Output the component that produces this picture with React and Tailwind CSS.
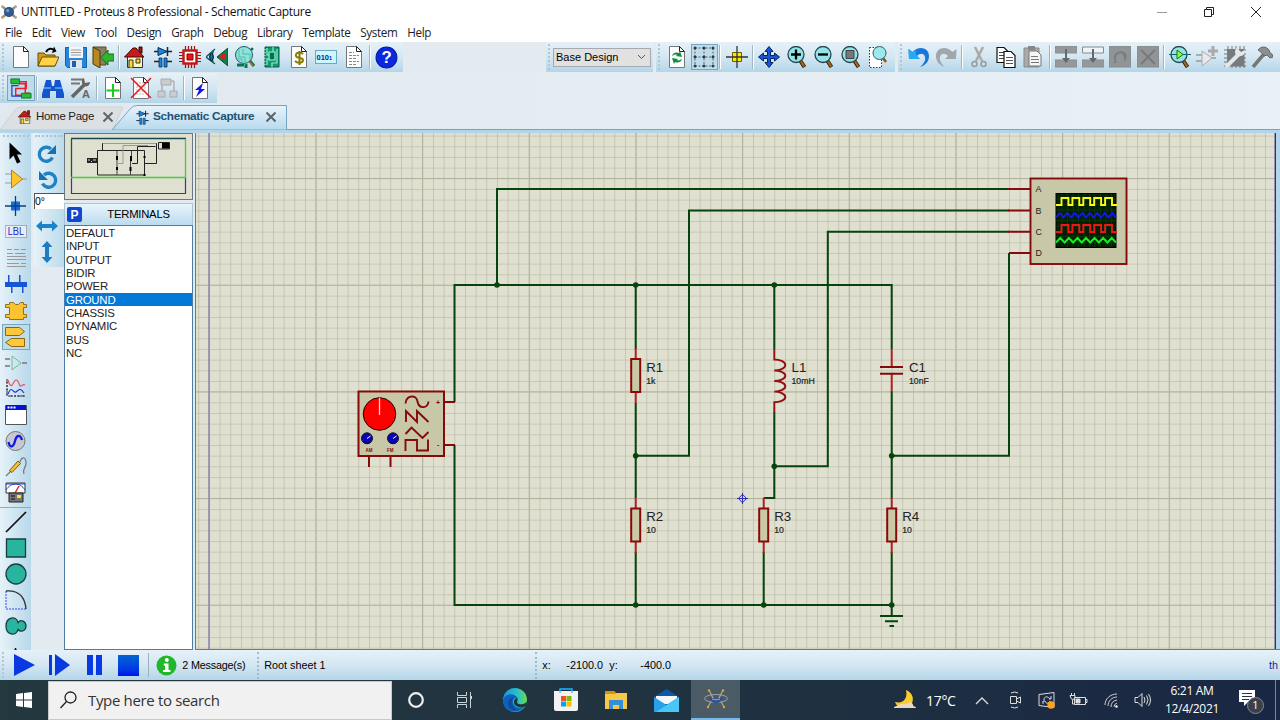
import React from "react";

const G = ({ children, s = 22, v = 22 }) => (
  <svg width={s} height={s} viewBox={`0 0 ${v} ${v}`} fill="none" className="shrink-0">
    {children}
  </svg>
);

const Page = ({ children, fold = "#fff" }) => (
  <>
    <path d="M3.500 .5h10l5 5v16h-15z" fill="#fdfdfd" stroke="#777" />
    <path d="M13.500 .5v5h5z" fill={fold} stroke="#222" />
    {children}
  </>
);

const Lens = ({ children }) => (
  <>
    <path d="M14.500 15l4 6" stroke="#3b2208" strokeWidth="4" />
    <path d="M15 15.500l3.200 5" stroke="#a8681c" strokeWidth="2.200" />
    <circle cx="10" cy="8.500" r="8" fill="#93e4e8" stroke="#24474e" strokeWidth="1.300" />
    {children}
  </>
);

const House = ({ s = 22 }) => (
  <G s={s}>
    <path d="M15 1h3v6h-3z" fill="#a01818" stroke="#300" />
    <path d="M3.500 10.500h15v11h-15z" fill="#fff6c8" stroke="#333" />
    <path d="M.5 11L9 2h3l8 9z" fill="#c41c1c" stroke="#4a0808" />
    <path d="M5 14h4v8H5z" fill="#f4dc2c" stroke="#333" />
    <path d="M12 13h4v4h-4z" fill="#f4dc2c" stroke="#333" />
  </G>
);

const DiodeCap = ({ s = 22 }) => (
  <G s={s}>
    <path d="M2 5.500h18M2 15.500h5M15 15.500h5" stroke="#222" strokeWidth="1.400" />
    <path d="M6 1.500v8l9-4z" fill="#1789e0" stroke="#0a2a50" />
    <path d="M15.500 1v9" stroke="#0a2a50" strokeWidth="1.500" />
    <path d="M7 12v9h3v-9zM12 12v9h3v-9z" fill="#1789e0" stroke="#0a2a50" strokeWidth=".8" />
  </G>
);

const icons = {
  newFile: <G><Page /></G>,
  open: (
    <G>
      <path d="M1 20V7h6l2 2h9v11z" fill="#d59a12" stroke="#6b4c08" />
      <path d="M1 20l4-9h17l-4 9z" fill="#ffd248" stroke="#6b4c08" />
      <path d="M9 6c2-4 6-4 8-2" stroke="#000" strokeWidth="2" />
      <path d="M15 7l4.500-1.500L17 .5z" fill="#000" />
    </G>
  ),
  save: (
    <G>
      <path d="M.5 1.500h21v20h-19l-2-2z" fill="#2586dc" stroke="#1460a8" />
      <path d="M4 1h14v11H4z" fill="#f6f6f6" />
      <path d="M6 4h10M6 6.500h10M6 9h10" stroke="#999" />
      <path d="M5 14h12v8H5z" fill="#e4e4e4" />
      <path d="M7 15h4v6H7z" fill="#1d5fa8" />
    </G>
  ),
  exit: (
    <G>
      <path d="M1 1h13v18H7" fill="#888061" stroke="#5a491c" />
      <path d="M1 1l7 4v17l-7-4z" fill="#b58a22" stroke="#4b3808" />
      <path d="M22 8v7h-6v4l-7-7.500L16 4v4z" fill="#2fb52f" stroke="#167016" />
    </G>
  ),
  house: <House />,
  diode: <DiodeCap />,
  chip: (
    <G>
      <path d="M6.500 0v22M9.500 0v22M12.500 0v22M15.500 0v22M0 6.500h22M0 9.500h22M0 12.500h22M0 15.500h22" stroke="#a51010" strokeWidth="1.200" />
      <path d="M4.500 4.500h13v13h-13z" fill="#fff" stroke="#c41818" strokeWidth="2.500" />
      <path d="M8 8h6v6H8z" fill="#ec1515" stroke="#800" />
    </G>
  ),
  view3d: (
    <G>
      <path d="M9 3L0 11l9 7M7.500 5c-2 4-2 8 0 12" stroke="#175a66" strokeWidth="1.400" />
      <ellipse cx="5.500" cy="11" rx="1.800" ry="3.500" fill="#067caf" stroke="#000" />
      <path d="M22 2v18l-11-9z" fill="#08824c" stroke="#054d2d" />
      <path d="M14 9l6-2v7l-6-2z" fill="#d42222" />
    </G>
  ),
  gerber: (
    <G>
      <path d="M3 19h7M12 18v4M16 15l4 5" stroke="#08754a" strokeWidth="3" />
      <circle cx="10" cy="9" r="8.500" fill="#92e2dc" stroke="#155f60" />
      <path d="M5 4v7h6v8M9 3v5h7v6M3 13h5v5" stroke="#4fb9a8" strokeWidth="1" />
      <circle cx="18" cy="3" r="1.500" fill="#0a7451" />
      <path d="M16 16l3 4" stroke="#a9701c" strokeWidth="2" />
    </G>
  ),
  bomBoard: (
    <G>
      <path d="M4 1h14v20H4z" fill="#179670" stroke="#075c42" />
      <path d="M8 6h6v8H8zM6 2v7h2M12 1v5M16 3v14h-5v4M6 19v-6h2" stroke="#86efcf" strokeWidth="1.200" />
      <path d="M9 7h4v6H9z" fill="#087049" />
      <path d="M4 3v17" stroke="#d8fff0" strokeDasharray="1 2" />
    </G>
  ),
  dollar: (
    <G>
      <Page />
      <path d="M15 8c-3-3-8-1-7 2s7 1 7 4-5 4-8 1M11.500 5v14" stroke="#8b7800" strokeWidth="2" />
    </G>
  ),
  bits: (
    <svg width="22" height="22" viewBox="0 0 22 22">
      <rect x=".5" y="4.500" width="21" height="13" fill="#cbf7ff" stroke="#6da7bc" />
      <text x="1.500" y="13.500" fontSize="7.500" fontWeight="bold" fontFamily="Liberation Sans" fill="#0a22a8">010<tspan fontSize="5.500">1</tspan></text>
    </svg>
  ),
  report: (
    <G><Page><path d="M6 6.500h5M6 9.500h10M6 12.500h7M6 15.500h10M6 18.500h8" stroke="#888" strokeDasharray="3 1" /></Page></G>
  ),
  help: (
    <svg width="23" height="23" viewBox="0 0 22 22">
      <circle cx="11" cy="11" r="10" fill="#0928df" stroke="#0618a0" />
      <text x="11" y="16.500" textAnchor="middle" fontSize="16" fontWeight="bold" fontFamily="Liberation Sans" fill="#fff">?</text>
    </svg>
  ),
  refresh: (
    <G>
      <Page>
        <path d="M6 10c1-4 5-4 7-3l1-2 2 6-6-1 1-1c-2-1-3 0-5 1zM16 13c-1 4-5 4-7 3l-1 2-2-6 6 1-1 1c2 1 3 0 5-1z" fill="#148b43" />
      </Page>
    </G>
  ),
  grid: (
    <G>
      <path d="M2 2h18M2 11h18M2 20h18M2 2v18M11 2v18M20 2v18" stroke="#444" strokeDasharray="2 1.500" strokeWidth=".8" />
      <path d="M.5 2h3M2 .5v3M9.500 2h3M11 .5v3M18.500 2h3M20 .5v3M.5 11h3M2 9.500v3M9.500 11h3M11 9.500v3M18.500 11h3M20 9.500v3M.5 20h3M2 18.500v3M9.500 20h3M11 18.500v3M18.500 20h3M20 18.500v3" stroke="#111" />
    </G>
  ),
  origin: (
    <G>
      <path d="M6.500 6.500h9v9h-9z" fill="#ffe800" stroke="#665c00" />
      <path d="M11 0v22M0 11h22" stroke="#333" strokeWidth="1.300" />
    </G>
  ),
  pan: (
    <G>
      <path d="M11 .5l4 5h-2.500v4h4V7l5 4-5 4v-2.500h-4v4H15l-4 5-4-5h2.500v-4h-4V15l-5-4 5-4v2.500h4v-4H7z" fill="#1554dc" stroke="#052454" />
    </G>
  ),
  zoomIn: <G><Lens><path d="M5 8.500h10M10 3.500v10" stroke="#000" strokeWidth="2.300" /></Lens></G>,
  zoomOut: <G><Lens><path d="M5 8.500h10" stroke="#000" strokeWidth="2.300" /></Lens></G>,
  zoomAll: <G><Lens><path d="M6 4.500h8v8H6z" fill="#777" stroke="#444" /></Lens></G>,
  zoomArea: (
    <G>
      <path d="M2.500 1.500h12v20h-12z" fill="#fff" stroke="#333" strokeDasharray="1.500 1.500" />
      <path d="M16 12l3 4" stroke="#8b5418" strokeWidth="2.500" />
      <circle cx="12.500" cy="7" r="6.500" fill="#9ce8ed" stroke="#24626c" />
    </G>
  ),
  undo: <G><path d="M1 13L.5 3l4 3C11-1 21 2 21 10c0 5-3 9-9 11 4-3 6-7 5-10-1-4-5-4-8-1l3 3z" fill="#1976dc" /><path d="M1 13L.5 3l4 3 3-2 1 6 3 3z" fill="#25aaf2" /></G>,
  redo: <G><path d="M21 13l.5-10-4 3C11-1 1 2 1 10c0 5 3 9 9 11-4-3-6-7-5-10 1-4 5-4 8-1l-3 3z" fill="#a0a6a9" /></G>,
  cut: (
    <G>
      <path d="M7 1l7 14M15 1L8 15" stroke="#aaa" strokeWidth="2.500" />
      <circle cx="6.500" cy="18" r="2.500" stroke="#999" strokeWidth="1.500" />
      <circle cx="15.500" cy="18" r="2.500" stroke="#999" strokeWidth="1.500" />
    </G>
  ),
  copy: (
    <G>
      <path d="M2 1.500h7l4 4v11H2z" fill="#fff" stroke="#111" strokeWidth="1.200" />
      <path d="M4 6.500h5M4 9.500h7M4 12.500h7" stroke="#444" />
      <path d="M9 5.500h7l4 4v12H9z" fill="#fff" stroke="#111" strokeWidth="1.200" />
      <path d="M11 11.500h7M11 14.500h7M11 17.500h7" stroke="#555" />
    </G>
  ),
  paste: (
    <G>
      <path d="M2 2h15v19H2z" fill="#aaa" stroke="#888" />
      <path d="M6 0h7v4H6z" fill="#888" />
      <path d="M7 5h8l4 4v11H7z" fill="#f5f5f5" stroke="#777" />
      <path d="M9 10.500h7M9 13.500h8M9 16.500h8" stroke="#777" />
    </G>
  ),
  blockCopy: <G><path d="M0 0h22v7H0zM0 14h22v7H0z" fill="#96999b" stroke="#898c8e" /><path d="M10 3h2v9h3l-4 5-4-5h3z" fill="#65696b" /></G>,
  blockMove: <G><path d="M.5 1h21v6H.5z" fill="#edf4f8" stroke="#858a8c" /><path d="M0 14h22v7H0z" fill="#96999b" stroke="#898c8e" /><path d="M10 3h2v9h3l-4 5-4-5h3z" fill="#65696b" /></G>,
  blockRot: <G><path d="M0 0h22v21H0z" fill="#929597" stroke="#858889" /><path d="M8 17H4l1.500-2C1 3 20 2 17.500 12L15 17c2-13-9-12-8-3z" fill="#7b7e80" /></G>,
  blockDel: <G><path d="M0 0h22v21H0z" fill="#929597" stroke="#858889" /><path d="M4 4l14 14M18 4L4 18" stroke="#77797b" strokeWidth="2" /></G>,
  pick: <G><Lens><path d="M0 8.500h22" stroke="#15616c" /><path d="M8 4v9l6-4.500z" fill="#8ffb43" stroke="#167316" /></Lens></G>,
  makeDev: <G><path d="M0 9h7M0 15h7M15 12h5" stroke="#999" strokeWidth="1.500" /><path d="M6 5v15l10-8z" fill="#e9e9e9" stroke="#aaa" /><path d="M17 0v10M12 5h10" stroke="#aaa" strokeWidth="3" /></G>,
  packaging: (
    <G>
      <path d="M4 0v22M8 0v22M12 0v22M16 0v22M20 0v22M0 4h22M0 8h22M0 12h22M0 16h22M0 20h22" stroke="#777" />
      <path d="M3 3h17v17H3z" fill="#767b7e" />
      <path d="M2 21L15 8" stroke="#e4e6e8" strokeWidth="4" />
      <path d="M14 1c-4 2-4 8 0 9 4 1 8-2 7-6l-4 2-2-2z" fill="#e4e6e8" />
    </G>
  ),
  hammer: <G><path d="M2 21L13 8" stroke="#777" strokeWidth="3.500" /><path d="M7 4c3-4 8-4 11 0l1 3 2 1 1 3-3 1-3-3-3 1-3-4z" fill="#8c8f91" stroke="#666" /></G>,
  wire: (
    <G s={23} v={24}>
      <path d="M8 5h10v7H7v7h13M10 7h7v10h5" stroke="#e82030" strokeWidth="1.500" />
      <path d="M10 9H3v11h10" stroke="#2835db" strokeWidth="1.300" />
      <path d="M2 2h9v5H2zM13 17h10v5H13z" fill="#25bd36" stroke="#14791f" />
    </G>
  ),
  binoc: <G><path d="M4 3h5l1 6h2l1-6h5l4 14v4h-8v-7h-6v7H0v-4z" fill="#1455ce" /><path d="M2 11h7M13 11h7" stroke="#4b94f0" strokeWidth="2" /></G>,
  propTool: (
    <svg width="22" height="22" viewBox="0 0 22 22" fill="none">
      <path d="M1 2.500h13M1 6.500h9" stroke="#777" strokeWidth="2" />
      <path d="M2 20L15 7" stroke="#666" strokeWidth="3.500" />
      <path d="M14 1l1 5 5-1c0 4-4 6-7 3-2-3-1-6 1-7z" fill="#666" />
      <text x="12" y="21" fontSize="11" fontWeight="bold" fontFamily="Liberation Sans" fill="#666">A</text>
    </svg>
  ),
  addSheet: <G><Page><path d="M11 7v13M4.500 13.500h13" stroke="#18cc20" strokeWidth="2" /></Page></G>,
  delSheet: <G><Page><path d="M6 6h9M6 17h9M7 9h8v5H7z" stroke="#bbb" strokeDasharray="2 1" /></Page><path d="M1 1l20 20M21 1L1 21" stroke="#ec1515" strokeWidth="1.500" /></G>,
  hier: <G><path d="M5 14V4h12v10" stroke="#999" /><path d="M4 2h10v6H4zM1 14h7v6H1zM13 14h7v6h-7z" fill="#ccc" stroke="#aaa" /></G>,
  erc: <G><Page><path d="M14 6l-8 7h4l-3 7 9-8h-4z" fill="#1418e4" /></Page></G>,
};

const Cell = ({ n }) => <div className="flex h-[28px] w-[27.3px] shrink-0 items-center justify-center">{icons[n]}</div>;
const Active = ({ n }) => (
  <div className="flex h-[26px] w-[27.3px] shrink-0 items-center justify-center border border-[#7ba6bf] bg-[#bddcec]">{icons[n]}</div>
);
const Sep = () => (
  <div className="flex w-[5.2px] shrink-0 justify-center">
    <div className="h-[24px] w-[2px] border-l border-[#a0b5c1] border-r border-r-white" />
  </div>
);
const Grip = () => <div className="ml-[2px] mr-[3.300px] h-[26px] w-[2px] shrink-0 border-l-2 border-dotted border-[#afc7d5]" />;
const bar = "flex items-center bg-gradient-to-b from-[#e6f1f8] via-[#d4e7f2] to-[#b4d6e9]";
const Cells = ({ names }) => names.split(" ").map((n) => <Cell key={n} n={n} />);

const X = () => (
  <svg width="10" height="10" viewBox="0 0 10 10" className="shrink-0"><path d="M.5 .5l9 9M9.500 .5l-9 9" stroke="#5a6469" strokeWidth="2" /></svg>
);

const Logo = ({ s = 18, dim = false }) => (
  <svg width={s} height={s} viewBox="0 0 24 24" fill="none">
    {dim ? (
      <>
        <ellipse cx="12" cy="11.500" rx="11.500" ry="4" stroke="#9aa0a8" />
        <path d="M5 3l4 8-5 9M19 3l-4 8 5 9" stroke="#b4a486" strokeWidth="1.200" />
        <path d="M5 10c4 2 10 2 14 0-1 8-13 8-14 0z" fill="#34508e" />
        <path d="M8 12c2 1 6 1 8 0" stroke="#8ea6d8" />
        <circle cx="5" cy="3.500" r="1.200" fill="#e8a02a" /><circle cx="19" cy="3.500" r="1.200" fill="#e8a02a" />
        <circle cx="4" cy="20" r="1.200" fill="#e8a02a" /><circle cx="20" cy="20" r="1.200" fill="#e8a02a" />
      </>
    ) : (
      <>
        <path d="M1 3l22 18M23 3L1 21" stroke="#8a8f99" strokeWidth="3.500" />
        <circle cx="12" cy="12" r="7" fill="#30598f" stroke="#1c3356" />
        <circle cx="10" cy="10" r="2.500" fill="#6d9cd0" />
        <circle cx="2" cy="20" r="1.800" fill="#e3a34a" /><circle cx="22" cy="20" r="1.800" fill="#e3a34a" />
        <circle cx="2" cy="4" r="1.500" fill="#c9b080" /><circle cx="22" cy="4" r="1.500" fill="#c9b080" />
      </>
    )}
  </svg>
);

const side = [
  <G><path d="M4.500 .5v17l4-4 3.500 8 3.500-1.600-3.500-7.400h5z" fill="#000" /></G>,
  <G><path d="M0 6h7M0 15h7M17 11h5" stroke="#999" /><path d="M6.500 2v18l11-9z" fill="#ffc62c" stroke="#a88125" /></G>,
  <G><path d="M6 6.500h9v9H6z" fill="#146ed8" /><path d="M10.500 1v20M0 11h21" stroke="#0a3f80" strokeWidth="1.300" /></G>,
  <svg width="22" height="22" viewBox="0 0 22 22"><rect x=".5" y="4.500" width="21" height="12" fill="#e5eef8" stroke="#777" strokeDasharray="1 1" /><text x="2.500" y="14.300" fontSize="10" letterSpacing="-.2" fontFamily="Open Sans" fill="#1b27bd">LBL</text></svg>,
  <G><path d="M2 2.500h5M9 2.500h5M16 2.500h5M2 6.500h6M10 6.500h10M2 9.500h19M2 12.500h19M2 16.500h12M16 16.500h5M2 19.500h19" stroke="#999" /></G>,
  <G><path d="M0 8h22v5H0zM3 1h1.500v8H3zM14 1h1.500v8H14zM6 12h1.500v7H6zM17 12h1.500v7H17z" fill="#1755d4" /></G>,
  <G><path d="M.5 4.500h4v-2h4l2 2h3l2-2h3v2h3v3h-3v7h3v3h-3v2h-14v-2h-4v-3h4v-7h-4z" fill="#fbc42f" stroke="#907026" /></G>,
  <G><path d="M.5 1.500h14l5 4-5 4h-14zM19.500 12.500h-13l-6 4 6 4h13z" fill="#ffc83b" stroke="#8c6613" /></G>,
  <G><path d="M0 7h5M0 14h5M17 11h5" stroke="#777" strokeWidth="1.300" /><path d="M7 4v14l9-7z" stroke="#71be89" /></G>,
  <G><path d="M2 1v17h18M1 4h2M1 8h2M1 12h2M1 16h2M6 17v3M10 17v3M14 17v3M18 17v3" stroke="#333" strokeDasharray="2 1" /><path d="M3 2c4 13 5 0 8 0s3 7 5 6 2-2 4-1" stroke="#e05060" strokeWidth="1.200" /><path d="M3 16c4-10 5 0 8-2s4-5 8 1" stroke="#2832db" strokeWidth="1.200" /></G>,
  <G><path d="M.5 1.500h21v19H.5z" fill="#fff" stroke="#555" /><path d="M1 1h20v5H1z" fill="#0610d4" /><path d="M2.500 3.500h8" stroke="#fff" strokeWidth="2" strokeDasharray="2 1" /></G>,
  <G><circle cx="10.500" cy="11" r="9.500" fill="#c6c8d2" stroke="#777" /><path d="M3.500 12c1.500 7 5 5 6.500-1s5-7 7-1" stroke="#1019df" strokeWidth="2.300" /></G>,
  <G><path d="M1 20l5-5M15 6c2-6 6-5 6 1s-4 5-2 11" stroke="#777" strokeWidth="1.200" /><path d="M4.500 14.500L13 5l2.500 2.500-8.500 9z" fill="#f5bf31" stroke="#79591c" /></G>,
  <G><path d="M1 1h19v10H1z" fill="#fff" stroke="#333" /><path d="M1 8c5-8 14-8 19 0M1 2h19" stroke="#2540b5" /><path d="M14 4l-4 7" stroke="#e22" strokeWidth="1.500" /><path d="M4 11h14v9H4z" fill="#777" stroke="#222" /><path d="M12 13h4v3h-4z" fill="#f6e442" /><path d="M6 14h4M6 17h4" stroke="#111" /></G>,
  null,
  <G><path d="M1 21L21 1" stroke="#111" strokeWidth="1.700" /></G>,
  <G><path d="M1.500 2h19v18h-19z" fill="#28b49e" stroke="#173f43" strokeWidth="1.300" /></G>,
  <G><circle cx="11" cy="11" r="10" fill="#28b49e" stroke="#173f43" strokeWidth="1.300" /></G>,
  <G><path d="M1 2v18h20" stroke="#3b4bea" strokeDasharray="2 1" /><path d="M1 2c14-1 19 7 20 18" stroke="#333" strokeWidth="1.300" /></G>,
  <G><path d="M13 7.500c3-4 8-1 8 3.500s-5 7-8 3.500C11 22 1 20 1 11S11 0 13 7.500z" fill="#28b49e" stroke="#173f43" strokeWidth="1.300" /></G>,
  <G><path d="M5 22L10 7h1l6 15h-4l-2-8-3 8z" fill="#111" /></G>,
];

const Wires = ({ children }) => <g stroke="#05450c" strokeWidth="2" fill="none">{children}</g>;
const Label = ({ x, y, name, value }) => (
  <g fontFamily="Liberation Sans" fill="#222">
    <text x={x} y={y} fontSize="13.300">{name}</text>
    <text x={x} y={y + 12} fontSize="8.700" stroke="#222" strokeWidth=".2">{value}</text>
  </g>
);
const Res = ({ x, y, name, value }) => (
  <g>
    <path d={`M${x} ${y - 27}v11M${x} ${y + 17}v12`} stroke="#b22222" strokeWidth="2" />
    <rect x={x - 4.5} y={y - 16} width="9" height="33" fill="#cac9a5" stroke="#850a0a" strokeWidth="2" />
    <Label x={x + 10.5} y={y - 3.5} name={name} value={value} />
  </g>
);
const square = (y) => `M1056 ${y + 7}h5.500` + "v-7h6.900v7h4".repeat(4) + "v-7h6.900v7h5";
const tri = (y, n) => {
  const w = 60 / n;
  return `M1056 ${y}` + `l${w / 2} -4.500l${w / 2} 4.500`.repeat(n);
};

const Schematic = () => (
  <svg className="block h-[516px] w-[1080px]" viewBox="196 133 1080 516" fill="none">
    <defs>
      <pattern id="fine" x="742.300" y="498.300" width="10.667" height="10.667" patternUnits="userSpaceOnUse">
        <path d="M0 .25h10.667M.25 0v10.667" stroke="#bfc0ac" strokeWidth="1.100" />
      </pattern>
      <pattern id="coarse" x="742" y="498" width="106.667" height="106.667" patternUnits="userSpaceOnUse">
        <path d="M0 .5h106.667M.5 0v106.667" stroke="#b2b4a0" strokeWidth="1.200" />
      </pattern>
    </defs>
    <rect x="196" y="133" width="1080" height="516" fill="#dfe0d0" />
    <rect x="196" y="133" width="1080" height="516" fill="url(#fine)" />
    <rect x="196" y="133" width="1080" height="516" fill="url(#coarse)" />
    <path d="M209 133v516" stroke="#8b86b8" strokeWidth="1.500" />
    <path d="M1275.300 133v516" stroke="#2f2a92" strokeWidth="1.400" />
    <Wires>
      <path d="M454.500 402V285H891.700v64M497 285V189h512M635.700 285v64M774.300 285v64" />
      <path d="M635.700 403v95M635.700 455.700H689V210.500h320M774.300 412v86H764M774.300 466.300h53.500V231.700H1009" />
      <path d="M891.700 391v108M891.700 455.700H1009V253M635.700 552v53M763.700 552v53M891.700 552v64M454.500 445v160H891.700" />
      <path d="M880 616h23M885 621.300h13M889.500 626h4.500" />
    </Wires>
    {[[497, 285], [635.7, 285], [774.3, 285], [635.7, 455.7], [774.3, 466.3], [891.7, 455.7], [635.7, 605], [763.7, 605], [891.7, 605]].map(([x, y]) => (
      <circle key={`${x}-${y}`} cx={x} cy={y} r="2.800" fill="#05450c" />
    ))}
    <Res x={635.7} y={375} name="R1" value="1k" />
    <Res x={635.7} y={524.5} name="R2" value="10" />
    <Res x={763.7} y={524.5} name="R3" value="10" />
    <Res x={891.7} y={524.5} name="R4" value="10" />
    <path d="M774.300 349v10.500c5 0 11 2 11 5.500s-6 5.500-11 5.500c5 0 11 2 11 5.200s-6 5.300-11 5.300c5 0 11 2 11 5.300s-6 5.300-11 5.300c5 0 11 2 11 5.300s-6 5.300-11 5.300v10" stroke="#921010" strokeWidth="1.900" />
    <Label x={791.5} y={371.5} name="L1" value="10mH" />
    <path d="M891.700 349v17M891.700 374v18" stroke="#b22222" strokeWidth="2" />
    <path d="M880 367h23M880 373.700h23" stroke="#850a0a" strokeWidth="2" />
    <Label x={909} y={371.5} name="C1" value="10nF" />
    <g stroke="#2f2cb2" strokeWidth="1"><path d="M737 498.500h11M742.500 493v11" /><path d="M742.500 494.300l4.200 4.200-4.200 4.200-4.200-4.200z" /></g>

    <g stroke="#850a0a" strokeWidth="2">
      <path d="M444 402h11M444 445h11M369 456v11M390.500 456v11" />
      <rect x="358.500" y="391.500" width="85.500" height="64.500" fill="#c8c8a8" />
      <path d="M405.500 403.500c1-9 11-9 12-2s10 8 11 0M406 422v-11l11 11v-11l11.500 11M405.500 434l6-6.500 11 10.500 6-6M405.500 451v-11h11.500v10.500h11v-11" strokeWidth="1.900" />
    </g>
    <circle cx="379.500" cy="414" r="16.300" fill="#f00" stroke="#200" />
    <path d="M379.500 398v17" stroke="#ffd4ca" strokeWidth="1.300" />
    <g fill="#0808b2" stroke="#111"><circle cx="367" cy="438.300" r="5.500" /><circle cx="393" cy="438.300" r="5.500" /></g>
    <path d="M367 438.500l3.500-2.500M393 438.500l3.500-2.500" stroke="#fff" />
    <g fontFamily="Liberation Sans" fill="#850a0a" fontWeight="bold" fontSize="4.500">
      <text x="365.500" y="452">AM</text><text x="387" y="452">FM</text><text x="436" y="405" fontSize="7">+</text><text x="437" y="447" fontSize="7">-</text>
    </g>

    <path d="M1008 189h22M1008 210.500h22M1008 231.700h22M1009 253h21" stroke="#850a0a" strokeWidth="2" />
    <rect x="1030.500" y="178.500" width="96" height="85.500" fill="#c8c8a8" stroke="#850a0a" strokeWidth="1.900" />
    <g fontFamily="Liberation Sans" fill="#222" fontSize="8.900"><text x="1035.500" y="192">A</text><text x="1035.500" y="213.500">B</text><text x="1035.500" y="235">C</text><text x="1035.500" y="256">D</text></g>
    <rect x="1056" y="193.500" width="60" height="54" fill="#041f04" stroke="#000" />
    <path d="M1062 194v53M1067.500 194v53M1073 194v53M1078.500 194v53M1084 194v53M1089.500 194v53M1095 194v53M1100.500 194v53M1106 194v53M1111.500 194v53M1056 199h60M1056 204.500h60M1056 210h60M1056 220.500h60M1056 226h60M1056 236.500h60M1056 242h60" stroke="#0a3a0a" strokeWidth=".8" />
    <path d={square(198)} stroke="#fbfb14" strokeWidth="1.900" />
    <path d={tri(217.5, 8)} stroke="#1418e4" strokeWidth="1.900" />
    <path d={square(225)} stroke="#ee1616" strokeWidth="1.900" />
    <path d={tri(242.5, 7)} stroke="#14f01e" strokeWidth="1.900" />
  </svg>
);

const Overview = () => (
  <svg className="block" width="126" height="65" viewBox="65 134 126 65" fill="none">
    <path d="M71.500 177v16.500h114V177" stroke="#3434b0" strokeWidth="1.200" />
    <path d="M71 138.500h115" stroke="#14484f" strokeWidth="1.500" />
    <path d="M71.500 139v38" stroke="#0f5a48" strokeWidth="1.300" />
    <path d="M71 177.500h114.500V139" stroke="#3fd03a" strokeWidth="1.300" />
    <path d="M97.500 150.500h47v24.500h-47zM102.500 150.500v-7h54v20h-12" stroke="#222" />
    <path d="M117 151v24M131.500 151v10h-1v14" stroke="#444" />
    <path d="M103 143.500h53M123 145.500h25M117 163.500h6v-18" stroke="#999" />
    <path d="M117 156v4M117 167v3M131 156v5M130.500 167v4M144.500 156v2M144.500 174v2" stroke="#000" strokeWidth="2" />
    <path d="M132 163.500h5.500v-17h18" stroke="#222" />
    <path d="M87 158h10v5H87z" fill="#222" /><path d="M88 160h2M91 161.500h1M93 160h3" stroke="#ddd" />
    <path d="M158.500 142.500h11v6.500h-11z" stroke="#222" /><path d="M162 143h7v5.500h-7z" fill="#000" />
  </svg>
);

const Rotate = ({ flip = false }) => (
  <svg width="20" height="20" viewBox="0 0 20 20" fill="none">
    <g transform={flip ? "translate(20 0) scale(-1 1)" : undefined}>
      <path d="M15.500 13.500A7 7 0 1 1 14 5" stroke="#1f82c4" strokeWidth="3.400" />
      <path d="M19 1v9h-9z" fill="#1670b4" />
    </g>
  </svg>
);

export default function App() {
  return (
    <div className="flex h-[720px] w-[1280px] flex-col overflow-hidden bg-[#e3ebf1] font-['Liberation_Sans',Arial,sans-serif] text-black">
      <header className="flex h-[24px] shrink-0 items-center bg-white font-['Open_Sans',sans-serif]">
        <div className="ml-[1px] flex w-[20px]"><Logo s={16} /></div>
        <span className="text-[12px] tracking-[-0.32px] text-[#111]">UNTITLED - Proteus 8 Professional - Schematic Capture</span>
        <div className="ml-auto flex items-center gap-[35px] pr-[18px]">
          <svg width="12" height="12"><path d="M1 6.500h10" stroke="#999" /></svg>
          <svg width="12" height="12" fill="none" stroke="#222"><path d="M1.500 3.500h7v7h-7zM3.500 3.500v-2h7v7h-2" /></svg>
          <svg width="12" height="12" stroke="#222"><path d="M1 1l10 10M11 1L1 11" /></svg>
        </div>
      </header>
      <nav className="flex h-[18px] shrink-0 items-center gap-[9.800px] bg-white pl-[5px] font-['Open_Sans',sans-serif] text-[11.700px] tracking-[-0.37px] text-[#222]">
        {["File", "Edit", "View", "Tool", "Design", "Graph", "Debug", "Library", "Template", "System", "Help"].map((m) => <span key={m}>{m}</span>)}
      </nav>
      <div className="flex h-[30px] shrink-0">
        <div className={`${bar} w-[403px]`}><Grip /><Cells names="newFile open save exit" /><Sep /><Cells names="house diode chip view3d gerber bomBoard dollar bits report" /><Sep /><Cell n="help" /></div>
        <div className={`${bar} ml-[143px] w-[107px]`}>
          <div className="ml-[2px] mr-[3px] h-[26px] border-l-2 border-dotted border-[#afc7d5]" />
          <div className="flex h-[19px] w-[98px] items-center justify-between border border-[#a5abb0] bg-[#e1e1e1] pl-[2px] pr-[4px] text-[11px]">
            Base Design
            <svg width="9" height="6" fill="none" stroke="#555"><path d="M1 1l3.500 3.500L8 1" /></svg>
          </div>
        </div>
        <div className={`${bar} ml-[3px] w-[239px]`}><Grip /><Cell n="refresh" /><Active n="grid" /><Sep /><Cell n="origin" /><Sep /><Cells names="pan zoomIn zoomOut zoomAll zoomArea" /></div>
        <div className={`${bar} ml-[3px] grow`}><Grip /><Cells names="undo redo" /><Sep /><Cells names="cut copy paste" /><Sep /><Cells names="blockCopy blockMove blockRot blockDel" /><Sep /><Cells names="pick makeDev packaging hammer" /></div>
      </div>
      <div className="flex h-[33px] shrink-0 bg-gradient-to-r from-[#e1e9ef] to-[#e9f1f8] pt-[1px]">
        <div className={`${bar} h-[30px] w-[217px]`}><Grip /><Active n="wire" /><Sep /><Cells names="binoc propTool" /><Sep /><Cells names="addSheet delSheet hier" /><Sep /><Cell n="erc" /></div>
      </div>
      <div className="relative flex h-[25px] shrink-0 border-b border-[#6fa5c2] bg-gradient-to-r from-[#e1e9ef] to-[#e9f1f8]">
        <svg className="absolute left-0 top-0" width="290" height="25" fill="none">
          <defs><linearGradient id="tab" x2="0" y2="1"><stop stopColor="#e6f3fb" /><stop offset="1" stopColor="#b8daee" /></linearGradient></defs>
          <path d="M0 24.500L15 5q2-3 6-3h102l-10 22.500z" fill="#dde0e2" stroke="#ccd2d6" />
          <path d="M112 25L130 4q3-3.500 7-3.500h149.500V25z" fill="url(#tab)" stroke="#76a6c0" />
        </svg>
        <div className="relative flex h-[24px] w-[134px] items-center pl-[18px] text-[11.500px] tracking-[-0.3px] text-[#222]"><House s={14} /><span className="ml-[4px] mr-[10px] w-[57px] whitespace-nowrap">Home Page</span><X /></div>
        <div className="relative flex h-[24px] items-center pl-[1px] text-[11.800px] font-bold tracking-[-0.33px] text-[#255273]"><DiodeCap s={15} /><span className="ml-[3px] mr-[10px] w-[103px] whitespace-nowrap">Schematic Capture</span><X /></div>
      </div>
      <main className="flex h-[520px] shrink-0 border-t-[3px] border-[#b3d5ea]">
        <aside className="flex w-[31px] shrink-0 flex-col items-center overflow-hidden bg-gradient-to-r from-[#e6f2f9] to-[#b8d8ea]">
          <div className="mb-[3px] mt-[2px] w-[26px] shrink-0 border-t-2 border-dotted border-[#a9c5d5]" />
          {side.map((el, i) => el === null ? (
            <div key={i} className="flex h-[3px] w-full shrink-0 items-center"><div className="h-px w-full bg-[#94a9b5]" /></div>
          ) : (
            <div key={i} className={`flex w-[28px] shrink-0 items-center justify-center ${i < 7 ? "h-[26.300px]" : "h-[26px]"} ${i === 7 ? "border border-[#7ba6bf] bg-[#bddcec]" : ""}`}>{el}</div>
          ))}
        </aside>
        <aside className="ml-[2px] w-[31px] shrink-0">
          <div className="flex h-[134px] flex-col items-center bg-gradient-to-r from-[#e6f2f9] to-[#bddbeb]">
            <div className="mt-[2px] w-[28px] border-t-2 border-dotted border-[#a9c5d5]" />
            <div className="mt-[4px] flex h-[26px] items-center pr-[4px]"><Rotate /></div>
            <div className="flex h-[26px] items-center pr-[1px]"><Rotate flip /></div>
            <div className="flex h-[16px] w-[30px] items-center self-end border-l border-t border-[#555] bg-white text-[10.500px]">0°</div>
            <div className="flex h-[34px] items-center pr-[4px]"><svg width="22" height="12" viewBox="0 0 22 12"><path d="M0 6l6-5.500V4h10V.5L22 6l-6 5.500V8H6v3.500z" fill="#1d83c8" /></svg></div>
            <div className="flex h-[18px] items-center pr-[3px]"><svg width="12" height="22" viewBox="0 0 12 22"><path d="M6 0l5.500 6H8v10h3.500L6 22 .5 16H4V6H.5z" fill="#1d7cc4" /></svg></div>
          </div>
        </aside>
        <section className="flex w-[129px] shrink-0 flex-col">
          <div className="h-[67px] border border-[#687984] bg-[#dfe0d0]"><Overview /></div>
          <div className="mt-[3px] flex h-[22px] shrink-0 items-center border-x border-t border-[#a9c4d4] bg-gradient-to-b from-[#e9f4fb] to-[#bbdcef] pl-[2px]">
            <span className="flex h-[15px] w-[15px] items-center justify-center rounded-[2px] bg-[#1046d0] text-[12px] font-bold text-white">P</span>
            <span className="grow pl-[3px] text-center text-[11.300px] tracking-[-0.25px]">TERMINALS</span>
          </div>
          <ul className="grow border border-[#4c7da4] bg-white text-[11.400px] tracking-[-0.2px] text-[#222]">
            {["DEFAULT", "INPUT", "OUTPUT", "BIDIR", "POWER", "GROUND", "CHASSIS", "DYNAMIC", "BUS", "NC"].map((t) => (
              <li key={t} className={`h-[13.35px] pl-[1px] leading-[14px] ${t === "GROUND" ? "bg-[#0478d7] text-white" : ""}`}>{t}</li>
            ))}
          </ul>
        </section>
        <section className="ml-[2px] min-w-0 grow border-b border-l border-[#777] bg-[#b3d5ea]"><Schematic /></section>
      </main>
      <div className={`${bar} h-[30px] shrink-0 text-[10.800px]`}>
        <Grip />
        <svg className="ml-[7px]" width="21" height="22"><path d="M0 0l21 11L0 22z" fill="#0939e0" /></svg>
        <svg className="ml-[14px]" width="21" height="22"><path d="M0 1h3v20H0zM6 0l15 11L6 22z" fill="#0939e0" /></svg>
        <svg className="ml-[17px]" width="15" height="22"><path d="M0 1h6v20H0zM9 1h6v20H9z" fill="#0939e0" /></svg>
        <div className="ml-[16px] h-[21px] w-[21px] bg-gradient-to-b from-[#0a62cf] to-[#060cf0]" />
        <div className="ml-[9px] h-[24px] w-px bg-[#9cafbb]" />
        <svg className="ml-[7px]" width="21" height="21" viewBox="0 0 21 21"><circle cx="10.500" cy="10.500" r="10" fill="#22b62b" /><path d="M8 8.500h4.500v6.500h2v2H7v-2h2v-4.500H7.500z" fill="#fff" /><circle cx="10.800" cy="5" r="2" fill="#fff" /></svg>
        <span className="ml-[5px] w-[74px] whitespace-nowrap tracking-[-0.2px]">2 Message(s)</span>
        <div className="ml-[1px] h-[27px] border-l-2 border-dotted border-[#a2bac8]" />
        <span className="ml-[5px] w-[265px]">Root sheet 1</span>
        <div className="ml-[6px] h-[27px] border-l-2 border-dotted border-[#a2bac8]" />
        <span className="ml-[5px] w-[24px]">x:</span><span className="w-[43px]">-2100.0</span><span className="w-[31px]">y:</span><span>-400.0</span>
        <span className="ml-auto pr-[2px] text-[#202a96]">th</span>
      </div>
      <footer className="flex h-[40px] shrink-0 items-center bg-gradient-to-r from-[#24383f] via-[#20333f] to-[#1a2744] font-['Open_Sans',sans-serif] text-white">
        <div className="flex w-[48px] justify-center"><svg width="16" height="16" fill="#fff"><path d="M0 2l7-1v6.500H0zM8 .9L16 0v7.500H8zM0 8.500h7V15l-7-1zM8 8.500h8V16l-8-1z" /></svg></div>
        <div className="flex h-[39px] w-[344px] items-center border border-[#c9c9c9] bg-[#f1f1f1] pl-[11px]">
          <svg width="17" height="18" viewBox="0 0 17 18" fill="none" stroke="#222" strokeWidth="1.300"><circle cx="10.500" cy="6.500" r="5.500" /><path d="M6.500 10.500l-6 6.500" /></svg>
          <span className="ml-[11px] text-[15px] tracking-[-0.34px] text-[#333]">Type here to search</span>
        </div>
        <div className="flex w-[48px] justify-center"><svg width="18" height="18" fill="none"><circle cx="9" cy="9" r="6.800" stroke="#eee" strokeWidth="2.200" /></svg></div>
        <div className="flex w-[48px] justify-center"><svg width="18" height="18" fill="none" stroke="#ccd3d6"><path d="M2.500 1v3.500h9V1M2.500 17v-3.500h9V17M2.500 6.500h9v5h-9zM15.500 1v16" /><path d="M15 6.500h2" strokeWidth="3" /></svg></div>
        <div className="flex w-[54px] justify-center">
          <svg width="24" height="24" viewBox="0 0 24 24"><defs><linearGradient id="edge"><stop stopColor="#1695df" /><stop offset=".6" stopColor="#2bc0cb" /><stop offset="1" stopColor="#67dc51" /></linearGradient></defs><circle cx="12" cy="12" r="12" fill="url(#edge)" /><path d="M0 13C1 4 13 5 15 11c-3-3-7 1-4 6 3 4 8 3 11 1-6 9-21 7-22-5z" fill="#0d62bd" /><path d="M11 10c-5 4-1 11 5 12-7 2-12-3-11-8 1-4 4-5 6-4z" fill="#104b9a" /><path d="M14 10c2 3-2 5 2 6 4 1 7-1 8-3l-1 5c-3 2-8 2-11-1-2-3-1-6 2-7z" fill="#20363f" /></svg>
        </div>
        <div className="flex w-[48px] justify-center"><svg width="24" height="24" viewBox="0 0 24 24"><path d="M6 6V1h12v5" fill="none" stroke="#1ca4ee" strokeWidth="1.500" /><path d="M0 3h24v18q0 2-2 2H2q-2 0-2-2z" fill="#f2f2f2" /><path d="M6 5V1h12v4" fill="none" stroke="#1ca4ee" /><path d="M7 8h5v5H7z" fill="#f25022" /><path d="M12.500 8h5v5h-5z" fill="#7fba00" /><path d="M7 13.500h5v5H7z" fill="#00a4ef" /><path d="M12.500 13.500h5v5h-5z" fill="#ffb900" /></svg></div>
        <div className="flex w-[52px] justify-center"><svg width="22" height="20" viewBox="0 0 22 20"><path d="M0 1h9l2 2h11v16H0z" fill="#f9c846" /><path d="M0 1h9l2 3H0z" fill="#d5930f" /><path d="M4 19v-9h14v9h-4v-4H8v4z" fill="#3390d8" /></svg></div>
        <div className="flex w-[49px] justify-center"><svg width="25" height="23" viewBox="0 0 25 23"><path d="M0 8l12.500-8L25 8v14H0z" fill="#0b59a8" /><path d="M2 7h21v8H2z" fill="#f4f6f8" /><path d="M0 8l12.500 8L25 8v15H0z" fill="#25a2eb" /><path d="M25 8v15H2z" fill="#48c7f7" /></svg></div>
        <div className="flex h-full w-[49px] items-center justify-center border-b-2 border-[#76b9ed] bg-[#4b5b66]"><Logo s={24} dim /></div>
        <div className="ml-auto flex h-full items-center">
          <svg width="22" height="21" viewBox="0 0 22 21"><path d="M12 0c10 4 9 17-2 18-5 0-8-3-9-6 8 2 13-3 11-12z" fill="#fbcb2e" /><path d="M0 17c4-1 5-3 8-3s4 1 6-1 5 0 5 2 3 1 3 3H0z" fill="#ead8c5" /></svg>
          <span className="ml-[10px] w-[49px] text-[14px] tracking-[-0.3px]">17°C</span>
          <svg width="14" height="9" fill="none" stroke="#ddd" strokeWidth="1.300"><path d="M1 8l6-6 6 6" /></svg>
          <svg className="ml-[18px]" width="16" height="18" fill="none" stroke="#ddd"><path d="M4 2q4-2 7 0M4 16q4 2 7 0M3.500 5.500h6v7h-6zM9.500 8l4-2v6l-4-2" /></svg>
          <svg className="ml-[15px]" width="18" height="19" viewBox="0 0 18 19" fill="none" stroke="#ddd"><path d="M1 3.500l15-2v15l-15-2z" /><path d="M6 9c0-4 4-4 6-1M11 8h2V5M12 10c-1 3-4 3-5 0M7 10H5v3" /><circle cx="13" cy="14" r="3.700" fill="#ffa21a" stroke="none" /></svg>
          <svg className="ml-[13px]" width="19" height="14" fill="none" stroke="#ddd"><path d="M5.500 4.500h11v7h-11zM17 6.500h1v3h-1M1 2.500h5v3q-2 2-4 0zM3.500 7v4h2M2.500 2V0M5.500 2V0" /><path d="M7 6h4v4H7z" fill="#ddd" /></svg>
          <svg className="ml-[16px]" width="15" height="15" fill="none" stroke="#ccc"><path d="M1 12C1 6 6 1 13 1M4 13C4 8 8 4 13 4M7 14q0-6 6-7M10 14q0-3 3-4" /><circle cx="12.500" cy="13.500" r="1" fill="#fff" /></svg>
          <svg className="ml-[15px]" width="18" height="16" fill="none" stroke="#ddd"><path d="M1 5.500h3l4-4v13l-4-4H1zM10 5q2 3 0 6M12.500 3.500q3 4 0 9M14.500 2q4 6 0 12" /></svg>
          <div className="ml-[7px] w-[66px] whitespace-nowrap text-center text-[12px] leading-[18px] tracking-[-0.3px]">6:21 AM<br />12/4/2021</div>
          <div className="relative ml-[14px] mr-[12px] h-[22px] w-[24px]">
            <svg width="17" height="18"><path d="M0 1h16v12H9l-4 4v-4H0z" fill="#fff" /><path d="M3 4.500h10M3 7.500h10M3 10.500h7" stroke="#25344b" /></svg>
            <span className="absolute left-[8px] top-[8px] flex h-[17px] w-[17px] items-center justify-center rounded-full border border-[#888] bg-[#39404c] text-[11px]">1</span>
          </div>
          <div className="h-full w-[5px] border-l border-[#7c8795]" />
        </div>
      </footer>
    </div>
  );
}
